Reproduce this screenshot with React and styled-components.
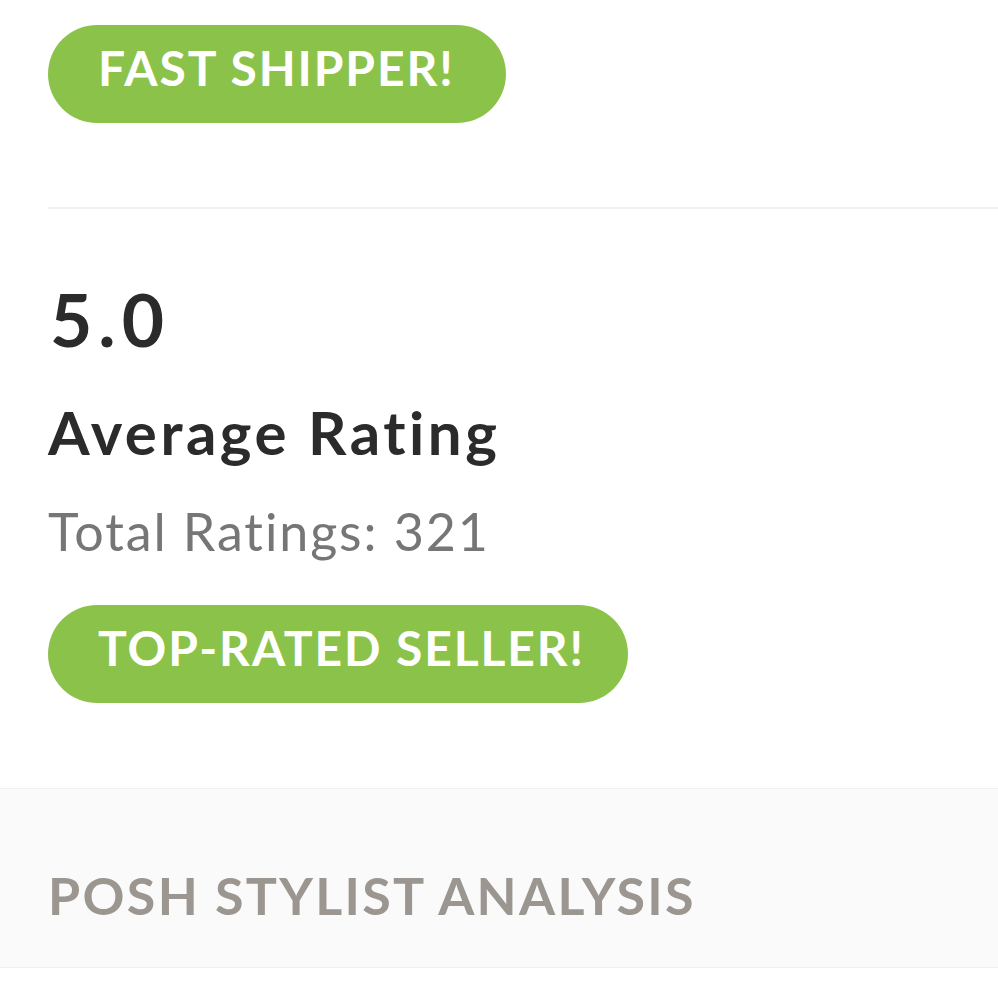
import styled, { createGlobalStyle } from 'styled-components';

const Global = createGlobalStyle`
  body {
    margin: 0;
    background: #fff;
    font-family: Lato, "Open Sans", sans-serif;
  }
`;

const Page = styled.div`
  display: flex;
  flex-direction: column;
  width: 998px;
`;

const Section = styled.section`
  display: flex;
  flex-direction: column;
  align-items: flex-start;
  padding: ${(p) => p.$pad};
  margin-left: 48px;
  border-bottom: ${(p) => (p.$divider ? '2px solid #f2f1f0' : 'none')};
`;

const Badge = styled.div`
  display: flex;
  align-items: center;
  box-sizing: border-box;
  height: 98px;
  padding: 0 ${(p) => p.$right || 48}px 13px 50px;
  margin-top: ${(p) => p.$top || 0}px;
  border-radius: 49px;
  background: #8bc34a;
  color: #fff;
  font-size: 48px;
  font-weight: 700;
  letter-spacing: 1.9px;
  line-height: 1;
  white-space: nowrap;
`;

const Score = styled.div`
  font-size: 73px;
  font-weight: 700;
  line-height: 1;
  letter-spacing: 6px;
  color: #2b2b2b;
  margin-left: 2px;
`;

const Title = styled.div`
  margin-top: 46px;
  font-size: 60px;
  font-weight: 700;
  line-height: 1;
  letter-spacing: 3.5px;
  color: #2b2b2b;
`;

const Sub = styled.div`
  margin-top: 43px;
  font-size: 52px;
  font-weight: 400;
  line-height: 1;
  letter-spacing: 1.9px;
  color: #767676;
`;

const Band = styled.div`
  box-sizing: border-box;
  height: 180px;
  padding: 80px 0 0 48px;
  background: #fafafa;
  border-top: 1px solid #f1f0ef;
  border-bottom: 1px solid #f1f0ef;
`;

const BandTitle = styled.div`
  font-size: 52px;
  font-weight: 700;
  line-height: 1;
  color: #9c9690;
  letter-spacing: 2.3px;
`;

export default function App() {
  return (
    <Page>
      <Global />
      <Section $pad="25px 0 84px" $divider>
        <Badge $right={51}>FAST SHIPPER!</Badge>
      </Section>
      <Section $pad="74px 0 85px">
        <Score>5.0</Score>
        <Title>Average Rating</Title>
        <Sub>Total Ratings: 321</Sub>
        <Badge $top={48} $right={43}>TOP-RATED SELLER!</Badge>
      </Section>
      <Band>
        <BandTitle>POSH STYLIST ANALYSIS</BandTitle>
      </Band>
    </Page>
  );
}
